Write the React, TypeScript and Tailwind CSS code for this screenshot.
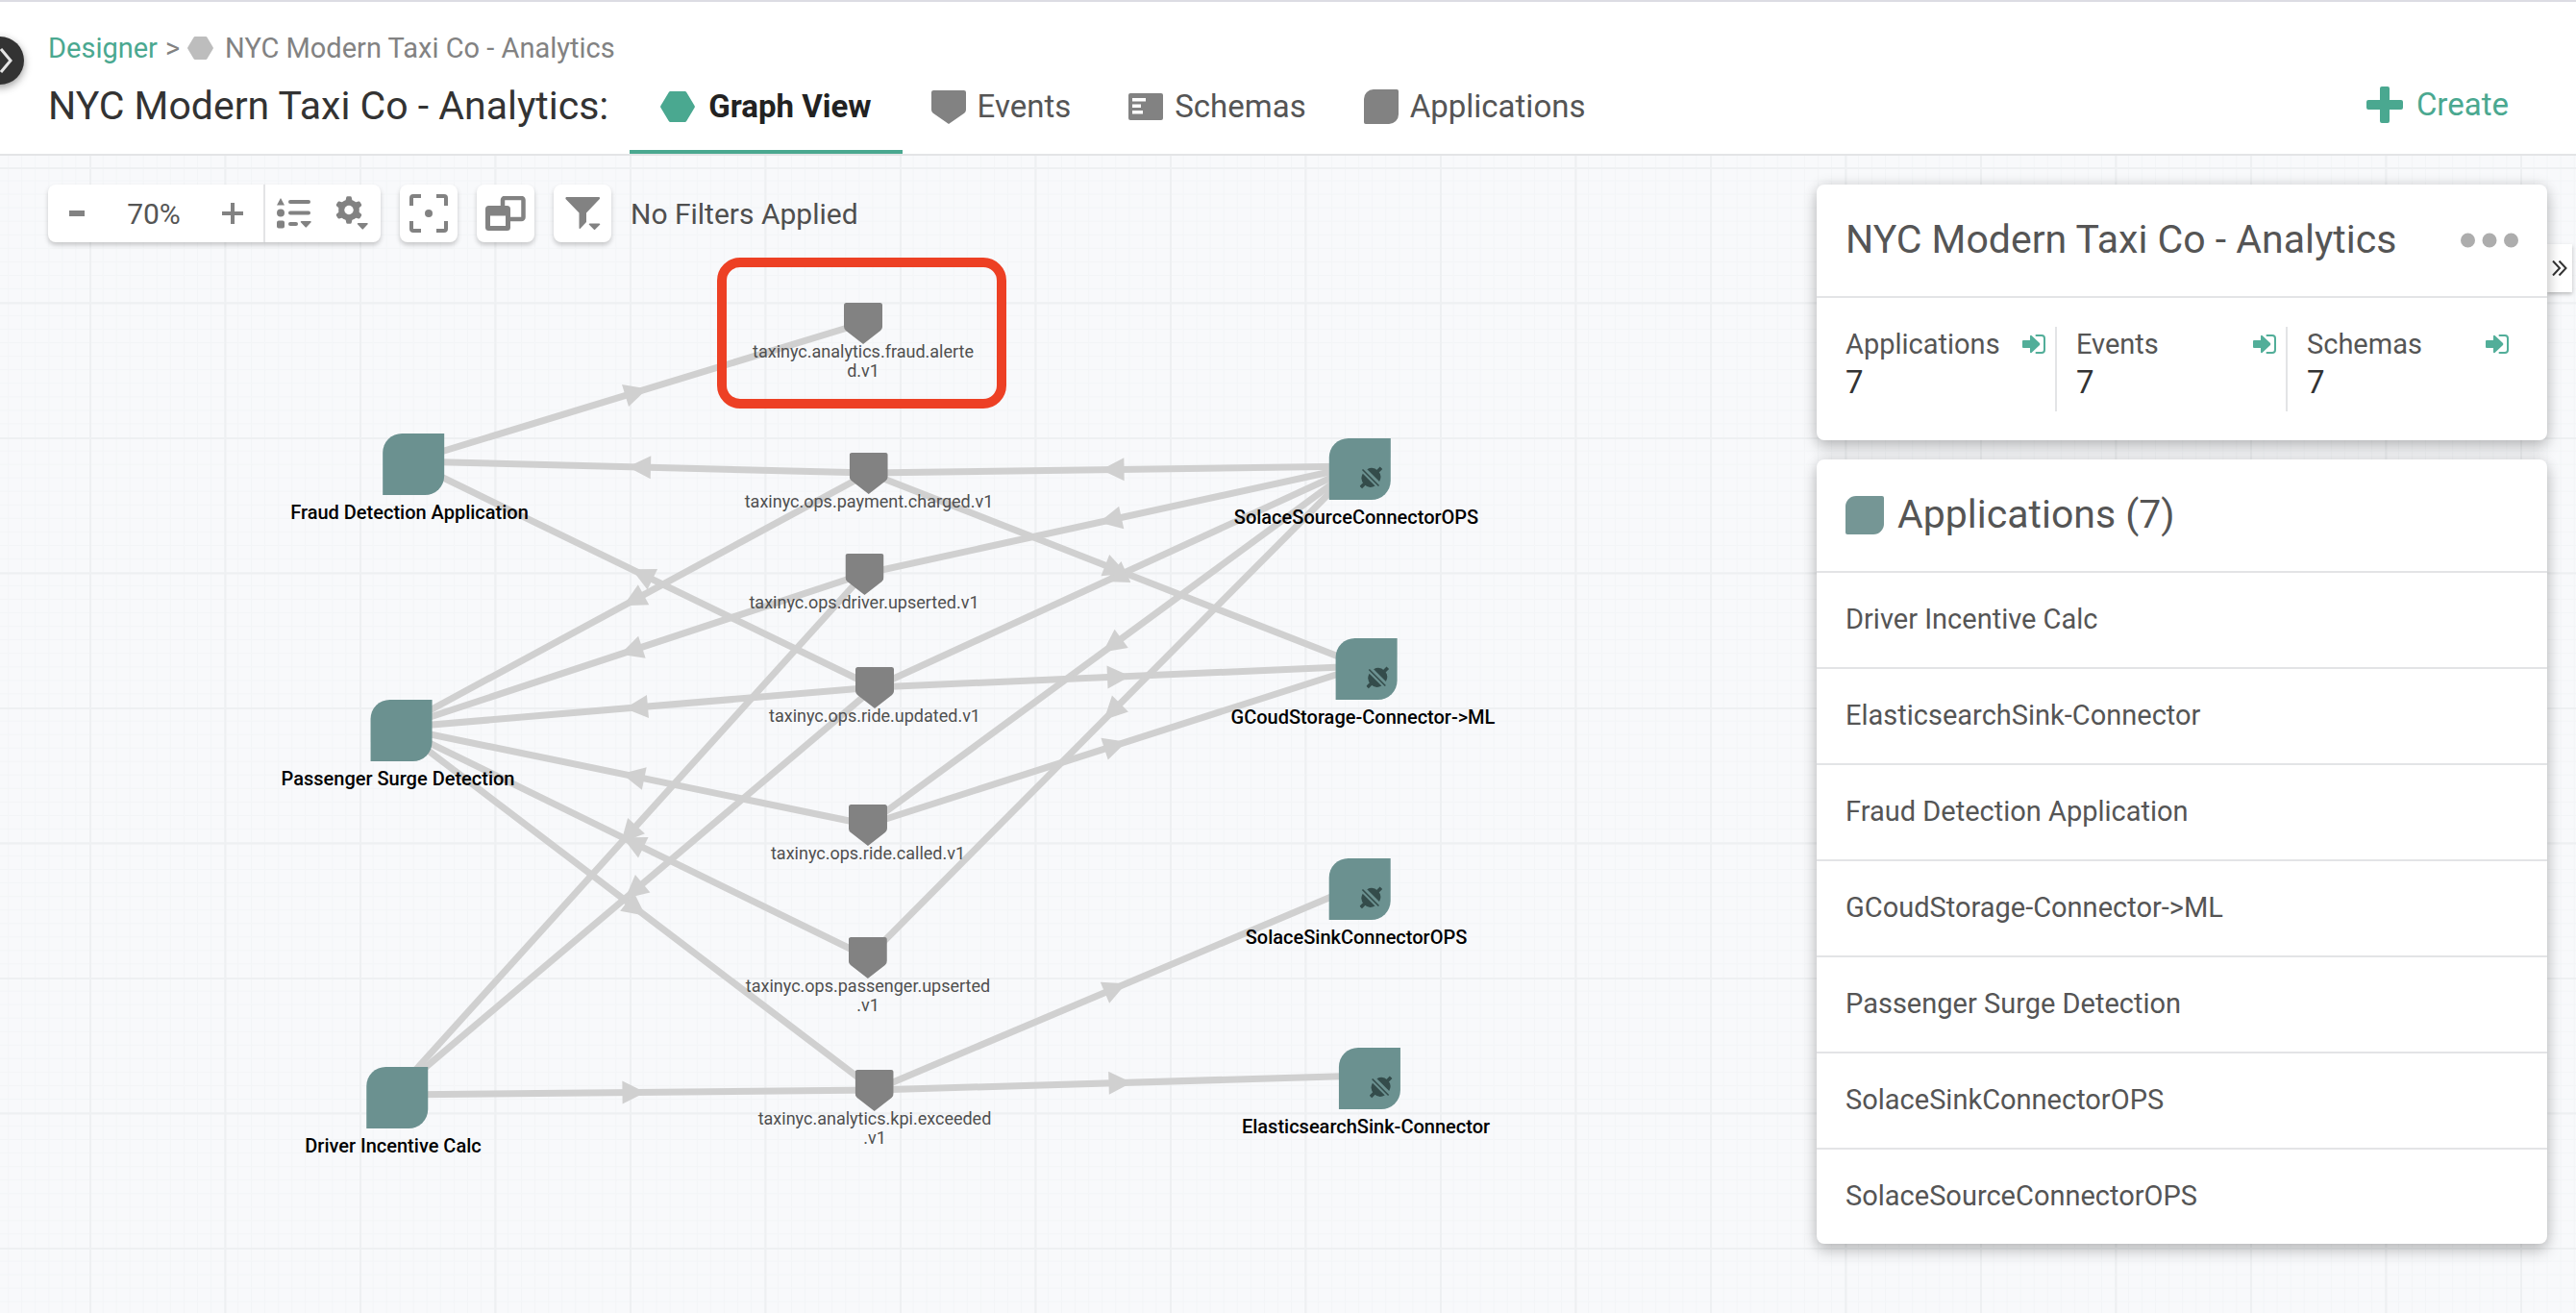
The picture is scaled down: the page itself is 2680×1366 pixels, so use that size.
import type { ReactNode } from "react";

/* ---------- icons ---------- */

function HexagonIcon({ className }: { className: string }) {
  return (
    <svg viewBox="0 0 36 32" className={className} fill="currentColor" aria-hidden="true">
      <path d="M10.5 0h15a2 2 0 0 1 1.7 1L35.6 15a2 2 0 0 1 0 2L27.2 31a2 2 0 0 1-1.7 1h-15a2 2 0 0 1-1.7-1L.4 17a2 2 0 0 1 0-2L8.8 1a2 2 0 0 1 1.7-1z" />
    </svg>
  );
}

function EventIcon({ className }: { className: string }) {
  return (
    <svg viewBox="0 0 40 43" preserveAspectRatio="none" className={className} fill="currentColor" aria-hidden="true">
      <path d="M2.5 0h35A2.5 2.5 0 0 1 40 2.5v22a6 6 0 0 1-2 4.600L20 43 2 29.100a6 6 0 0 1-2-4.600v-22A2.500 2.500 0 0 1 2.500 0z" />
    </svg>
  );
}

function SchemaIcon({ className }: { className: string }) {
  return (
    <svg viewBox="0 0 36 28" className={className} aria-hidden="true">
      <rect width="36" height="28" rx="2" fill="currentColor" />
      <path d="M4 5h14v3.500H4zM4 11.500h9V15H4zM4 18h11v3.500H4z" fill="#fff" />
    </svg>
  );
}

function ApplicationIcon({ className }: { className: string }) {
  return (
    <svg viewBox="0 0 40 40" className={className} fill="currentColor" aria-hidden="true">
      <path d="M11 0h27a2 2 0 0 1 2 2v27a11 11 0 0 1-11 11H2a2 2 0 0 1-2-2V11A11 11 0 0 1 11 0z" />
    </svg>
  );
}

function PlusIcon({ className }: { className: string }) {
  return (
    <svg viewBox="0 0 38 38" className={className} fill="currentColor" aria-hidden="true">
      <path d="M16 0h6a2 2 0 0 1 2 2v12h12a2 2 0 0 1 2 2v6a2 2 0 0 1-2 2H24v12a2 2 0 0 1-2 2h-6a2 2 0 0 1-2-2V24H2a2 2 0 0 1-2-2v-6a2 2 0 0 1 2-2h12V2a2 2 0 0 1 2-2z" />
    </svg>
  );
}

function LegendIcon() {
  return (
    <svg viewBox="0 0 36 32" className="h-8 w-9" fill="currentColor" aria-hidden="true">
      <path d="M4 0l4 7.500H0zM4 11.500a4 4 0 1 1 0 8 4 4 0 0 1 0-8zM2 23.500h4a2 2 0 0 1 2 2v4a2 2 0 0 1-2 2H2a2 2 0 0 1-2-2v-4a2 2 0 0 1 2-2z" />
      <rect x="12" y="2" width="23" height="4" rx="2" />
      <rect x="12" y="13.500" width="23" height="4" rx="2" />
      <rect x="12" y="25" width="10" height="4" rx="2" />
      <path d="M25.500 24h9.500a.8.8 0 0 1 .6 1.300l-4.700 5a.9.9 0 0 1-1.300 0l-4.700-5a.8.8 0 0 1 .6-1.300z" />
    </svg>
  );
}

const GEAR_TEETH = [0, 60, 120, 180, 240, 300];

function SettingsIcon() {
  return (
    <svg viewBox="0 0 34 36" className="h-9 w-9" aria-hidden="true">
      <g fill="currentColor">
        <circle cx="14" cy="14.500" r="10.800" />
        {GEAR_TEETH.map((a) => (
          <path key={a} d="M10.300 6l.9-4.500q.2-1.200 1.400-1.200h2.800q1.200 0 1.400 1.200l.9 4.500z" transform={`rotate(${a} 14 14.5)`} />
        ))}
        <path d="M23.500 28h9.500a.8.8 0 0 1 .6 1.300l-4.700 5a.9.9 0 0 1-1.300 0l-4.700-5a.8.8 0 0 1 .6-1.300z" />
      </g>
      <circle cx="14" cy="14.500" r="4.700" fill="#fff" />
    </svg>
  );
}

function FitIcon() {
  return (
    <svg viewBox="0 0 40 40" className="size-10" aria-hidden="true">
      <path d="M2 12V4a2 2 0 0 1 2-2h8M28 2h8a2 2 0 0 1 2 2v8M38 28v8a2 2 0 0 1-2 2h-8M12 38H4a2 2 0 0 1-2-2v-8" fill="none" stroke="currentColor" strokeWidth="4" />
      <circle cx="20" cy="20" r="4" fill="currentColor" />
    </svg>
  );
}

function WindowsIcon() {
  return (
    <svg viewBox="0 0 42 36" className="h-9 w-[42px]" aria-hidden="true">
      <rect x="18" y="2" width="21.500" height="22" rx="2" fill="none" stroke="currentColor" strokeWidth="4.500" />
      <rect x="0" y="10" width="26" height="26" rx="3.500" fill="currentColor" />
      <rect x="5" y="20.500" width="16" height="10.500" fill="#fff" />
    </svg>
  );
}

function FilterIcon() {
  return (
    <svg viewBox="0 0 37 35" className="h-[35px] w-[37px]" fill="currentColor" aria-hidden="true">
      <path d="M1 0h34.500q1 .8.300 2L22 16.500v9.500L15.500 33q-1 .3-1-1V16.500L.5 2Q0 .8 1 0z" />
      <path d="M25.500 27.500h10a.8.8 0 0 1 .6 1.300l-5 5a.9.9 0 0 1-1.200 0l-5-5a.8.8 0 0 1 .6-1.300z" />
    </svg>
  );
}

function OpenIcon() {
  return (
    <svg viewBox="0 0 24 20" className="h-5 w-6 text-[#52ae99]" aria-hidden="true">
      <path d="M1 6h7V1.500q.5-1.300 1.500-.5l8.500 8q.7 1 0 2l-8.500 8q-1 .8-1.500-.5V14H1a1 1 0 0 1-1-1V7a1 1 0 0 1 1-1z" fill="currentColor" />
      <path d="M14.500 1H20a3 3 0 0 1 3 3v12a3 3 0 0 1-3 3h-5.500" fill="none" stroke="currentColor" strokeWidth="2" strokeLinecap="round" />
    </svg>
  );
}

function ConnectorIcon() {
  return (
    <svg viewBox="0 0 24 24" className="absolute top-[29px] left-8 size-6 text-[#344c4b]" fill="currentColor" aria-hidden="true">
      <path d="M7.500 3.200A9.400 9.400 0 0 1 20.300 16zM3 7.700A9.400 9.400 0 0 0 15.800 20.500z" />
      <path d="M2.700 3.500l17 17" stroke="currentColor" strokeWidth="1.600" />
      <path d="M17.500 6.500l4.700-4.700M5.500 17.500l-4.500 4.500" stroke="currentColor" strokeWidth="3.600" />
    </svg>
  );
}

/* ---------- graph data (canvas coordinates) ---------- */

type AppNode = { id: string; name: string; x: number; y: number; connector?: boolean };
type EventNode = { id: string; lines: string[]; x: number; y: number };

const APPS: AppNode[] = [
  { id: "fraud", name: "Fraud Detection Application", x: 426, y: 318 },
  { id: "surge", name: "Passenger Surge Detection", x: 414, y: 595 },
  { id: "driverCalc", name: "Driver Incentive Calc", x: 409, y: 977 },
  { id: "source", name: "SolaceSourceConnectorOPS", x: 1411, y: 323, connector: true },
  { id: "gcloud", name: "GCoudStorage-Connector->ML", x: 1418, y: 531, connector: true },
  { id: "sink", name: "SolaceSinkConnectorOPS", x: 1411, y: 760, connector: true },
  { id: "elastic", name: "ElasticsearchSink-Connector", x: 1421, y: 957, connector: true },
];

const EVENTS: EventNode[] = [
  { id: "alerted", lines: ["taxinyc.analytics.fraud.alerte", "d.v1"], x: 898, y: 174 },
  { id: "charged", lines: ["taxinyc.ops.payment.charged.v1"], x: 904, y: 330 },
  { id: "driver", lines: ["taxinyc.ops.driver.upserted.v1"], x: 899, y: 435 },
  { id: "updated", lines: ["taxinyc.ops.ride.updated.v1"], x: 910, y: 553 },
  { id: "called", lines: ["taxinyc.ops.ride.called.v1"], x: 903, y: 696 },
  { id: "passenger", lines: ["taxinyc.ops.passenger.upserted", ".v1"], x: 903, y: 834 },
  { id: "kpi", lines: ["taxinyc.analytics.kpi.exceeded", ".v1"], x: 910, y: 972 },
];

const EDGES: [string, string][] = [
  ["fraud", "alerted"],
  ["charged", "fraud"],
  ["updated", "fraud"],
  ["charged", "surge"],
  ["driver", "surge"],
  ["updated", "surge"],
  ["called", "surge"],
  ["passenger", "surge"],
  ["surge", "kpi"],
  ["driver", "driverCalc"],
  ["updated", "driverCalc"],
  ["driverCalc", "kpi"],
  ["source", "charged"],
  ["source", "driver"],
  ["source", "updated"],
  ["source", "called"],
  ["source", "passenger"],
  ["charged", "gcloud"],
  ["updated", "gcloud"],
  ["called", "gcloud"],
  ["kpi", "sink"],
  ["kpi", "elastic"],
];

const POINTS = new Map([...APPS, ...EVENTS].map((n) => [n.id, n]));

function Edge({ from, to }: { from: string; to: string }) {
  const a = POINTS.get(from)!;
  const b = POINTS.get(to)!;
  const angle = (Math.atan2(b.y - a.y, b.x - a.x) * 180) / Math.PI;
  return (
    <g>
      <line x1={a.x} y1={a.y} x2={b.x} y2={b.y} stroke="#d0d0d0" strokeWidth="7" />
      <path d="M12 0L-12 -12V12z" fill="#d0d0d0" transform={`translate(${(a.x + b.x) / 2} ${(a.y + b.y) / 2}) rotate(${angle})`} />
    </g>
  );
}

const MINOR = Array.from({ length: 20 }, (_, i) => i * 14.05);

function Grid() {
  return (
    <svg className="absolute inset-0 h-full w-full" aria-hidden="true">
      <defs>
        <pattern id="grid" x="93" y="12" width="281" height="281" patternUnits="userSpaceOnUse">
          {MINOR.map((p) => (
            <path key={p} d={`M${p} 0V281M0 ${p}H281`} stroke="#f3f5f7" strokeWidth="1" />
          ))}
          <path d="M1 0V281M141.500 0V281M0 1H281M0 141.500H281" stroke="#eef0f2" strokeWidth="2" />
        </pattern>
      </defs>
      <rect width="100%" height="100%" fill="url(#grid)" />
    </svg>
  );
}

function Graph() {
  return (
    <div className="absolute inset-0 overflow-hidden">
      <Grid />
      <svg className="absolute inset-0 h-full w-full" aria-hidden="true">
        {EDGES.map(([from, to]) => (
          <Edge key={`${from}-${to}`} from={from} to={to} />
        ))}
      </svg>
      {APPS.map((n) => (
        <div key={n.id} className="absolute flex -translate-x-1/2 flex-col items-center" style={{ left: n.x, top: n.y - 29 }}>
          <div className="relative ml-2 size-16 rounded-tl-[20px] rounded-br-[20px] bg-[#6b9190]">{n.connector && <ConnectorIcon />}</div>
          <span className="mt-1.5 text-[20px] leading-6 font-medium whitespace-nowrap text-black">{n.name}</span>
        </div>
      ))}
      {EVENTS.map((n) => (
        <div key={n.id} className="absolute flex -translate-x-1/2 flex-col items-center" style={{ left: n.x, top: n.y - 21 }}>
          <EventIcon className="h-[43px] w-10 text-[#828282]" />
          <span className="-mt-0.5 text-center text-[18px] leading-5 whitespace-nowrap text-[#4f4f4f]">
            {n.lines.map((l) => (
              <span key={l} className="block">
                {l}
              </span>
            ))}
          </span>
        </div>
      ))}
      <div className="absolute top-[106px] left-[746px] h-[157px] w-[301px] rounded-[24px] border-10 border-[#ed4024]" />
    </div>
  );
}

/* ---------- page parts ---------- */

function Tab({ icon, label, active }: { icon: ReactNode; label: string; active?: boolean }) {
  return (
    <button
      type="button"
      role="tab"
      aria-selected={!!active}
      className={
        active
          ? "flex items-center gap-3.5 border-b-4 border-[#4aa890] px-8 text-[33px] font-bold text-[#222]"
          : "flex items-center gap-3 border-b-4 border-transparent px-[30px] text-[33px] text-[#555]"
      }
    >
      {icon}
      {label}
    </button>
  );
}

function Header() {
  return (
    <header className="relative border-t-2 border-b-2 border-t-[#dcdce3] border-b-[#e3e4e6] bg-white pt-8">
      <button
        type="button"
        aria-label="Expand navigation"
        className="absolute top-9 -left-[25px] flex size-[50px] items-center justify-end rounded-full bg-[#333] pr-3 shadow-[0_3px_8px_rgba(0,0,0,0.4)]"
      >
        <svg viewBox="0 0 14 28" className="h-7 w-3.5" aria-hidden="true">
          <path d="M2 2l10 12L2 26" fill="none" stroke="#e4e4e4" strokeWidth="3" />
        </svg>
      </button>
      <nav aria-label="Breadcrumb" className="flex h-8 items-center pl-[50px] text-[29px] leading-8 text-[#828282]">
        <a href="#designer" className="text-[#4aa890]">
          Designer
        </a>
        <span className="mx-2">&gt;</span>
        <HexagonIcon className="mr-3 h-6 w-[27px] text-[#bdbdbd]" />
        <span>NYC Modern Taxi Co - Analytics</span>
      </nav>
      <div className="flex h-[94px] pr-[70px] pl-[50px]">
        <h1 className="mr-[22px] flex items-center pb-1 text-[41px] text-[#333]">NYC Modern Taxi Co - Analytics:</h1>
        <div role="tablist" className="flex">
          <Tab active icon={<HexagonIcon className="h-8 w-9 text-[#4aa890]" />} label="Graph View" />
          <Tab icon={<EventIcon className="h-[35px] w-9 text-[#828282]" />} label="Events" />
          <Tab icon={<SchemaIcon className="h-7 w-9 text-[#828282]" />} label="Schemas" />
          <Tab icon={<ApplicationIcon className="size-9 text-[#828282]" />} label="Applications" />
        </div>
        <button type="button" className="ml-auto flex items-center gap-3.5 pb-2 text-[33px] text-[#4aa890]">
          <PlusIcon className="size-[38px]" />
          Create
        </button>
      </div>
    </header>
  );
}

const TOOL_CARD = "flex h-[60px] items-center rounded-lg bg-white shadow-[0_3px_5px_rgba(0,0,0,0.2)]";

function ToolButton({ label, children }: { label: string; children: ReactNode }) {
  return (
    <button type="button" aria-label={label} className="flex h-[60px] w-[60px] items-center justify-center">
      {children}
    </button>
  );
}

function Toolbar() {
  return (
    <div role="toolbar" className="relative flex h-[60px] items-center gap-5 text-[#828282]">
      <div className={TOOL_CARD}>
        <ToolButton label="Zoom out">
          <svg viewBox="0 0 16 6" className="h-1.5 w-4" aria-hidden="true">
            <rect width="16" height="6" fill="currentColor" />
          </svg>
        </ToolButton>
        <span className="w-[100px] text-center text-[30px] text-[#555]">70%</span>
        <button type="button" aria-label="Zoom in" className="flex h-[60px] w-16 items-center justify-center">
          <svg viewBox="0 0 22 22" className="size-[22px]" aria-hidden="true">
            <path d="M11 0v22M0 11h22" stroke="currentColor" strokeWidth="4" />
          </svg>
        </button>
        <div className="h-[60px] w-0.5 bg-[#e3e4e6]" />
        <ToolButton label="Legend">
          <LegendIcon />
        </ToolButton>
        <ToolButton label="Settings">
          <SettingsIcon />
        </ToolButton>
      </div>
      <div className={TOOL_CARD}>
        <ToolButton label="Fit to screen">
          <FitIcon />
        </ToolButton>
      </div>
      <div className={TOOL_CARD}>
        <ToolButton label="Arrange">
          <WindowsIcon />
        </ToolButton>
      </div>
      <div className={TOOL_CARD}>
        <ToolButton label="Filter">
          <FilterIcon />
        </ToolButton>
      </div>
      <span className="text-[30px] text-[#4f4f4f]">No Filters Applied</span>
    </div>
  );
}

function Stat({ label, value, className }: { label: string; value: number; className: string }) {
  return (
    <div className={className}>
      <div className="flex h-9 items-center justify-between pr-2.5 text-[29px] leading-9 text-[#555]">
        {label}
        <a href={`#${label.toLowerCase()}`} aria-label={`Open ${label}`}>
          <OpenIcon />
        </a>
      </div>
      <div className="text-[33px] leading-11 text-[#333]">{value}</div>
    </div>
  );
}

const APPLICATIONS = [
  "Driver Incentive Calc",
  "ElasticsearchSink-Connector",
  "Fraud Detection Application",
  "GCoudStorage-Connector->ML",
  "Passenger Surge Detection",
  "SolaceSinkConnectorOPS",
  "SolaceSourceConnectorOPS",
];

const CARD = "relative rounded-lg bg-white shadow-[0_8px_16px_rgba(0,0,0,0.2),0_0_14px_rgba(0,0,0,0.12)]";

function SidePanel() {
  return (
    <aside className="relative flex w-[760px] shrink-0 flex-col gap-5">
      <button
        type="button"
        aria-label="Collapse panel"
        className="absolute top-[62px] left-full flex h-[50px] w-[26px] items-center justify-center bg-white shadow-[0_2px_4px_rgba(0,0,0,0.25)]"
      >
        <svg viewBox="0 0 16 16" className="size-4" fill="none" stroke="#333" strokeWidth="2" aria-hidden="true">
          <path d="M1 0.500l7 7.500-7 7.500M7.500 0.500l7 7.500-7 7.500" />
        </svg>
      </button>
      <section className={CARD}>
        <div className="flex h-[118px] items-center justify-between border-b-2 border-[#e3e4e6] px-[30px]">
          <h2 className="text-[41px] text-[#555]">NYC Modern Taxi Co - Analytics</h2>
          <button type="button" aria-label="More actions" className="text-[#adadad]">
            <svg viewBox="0 0 60 16" className="h-4 w-[60px]" fill="currentColor" aria-hidden="true">
              <circle cx="7.500" cy="8" r="7.500" />
              <circle cx="30" cy="8" r="7.500" />
              <circle cx="52.500" cy="8" r="7.500" />
            </svg>
          </button>
        </div>
        <div className="grid grid-cols-[11fr_12fr_12fr] px-[30px] py-[30px]">
          <Stat label="Applications" value={7} className="h-[88px] border-r-2 border-[#e3e4e6]" />
          <Stat label="Events" value={7} className="h-[88px] border-r-2 border-[#e3e4e6] pl-5" />
          <Stat label="Schemas" value={7} className="h-[88px] pl-5" />
        </div>
      </section>
      <section className={CARD}>
        <h2 className="flex h-[118px] items-center gap-3.5 border-b-2 border-[#e3e4e6] px-[30px] text-[41px] text-[#555]">
          <ApplicationIcon className="size-10 text-[#759695]" />
          Applications (7)
        </h2>
        <ul className="divide-y-2 divide-[#e3e4e6] text-[29px] text-[#555]">
          {APPLICATIONS.map((name) => (
            <li key={name} className="box-content flex h-[98px] items-center px-[30px]">
              {name}
            </li>
          ))}
        </ul>
      </section>
    </aside>
  );
}

export default function App() {
  return (
    <div className="flex min-h-screen flex-col bg-white font-['Roboto',sans-serif]">
      <Header />
      <main className="relative flex flex-1 items-start justify-between bg-[#f8f9fb] pt-[30px] pr-[30px] pb-10 pl-[50px]">
        <Graph />
        <Toolbar />
        <SidePanel />
      </main>
    </div>
  );
}
